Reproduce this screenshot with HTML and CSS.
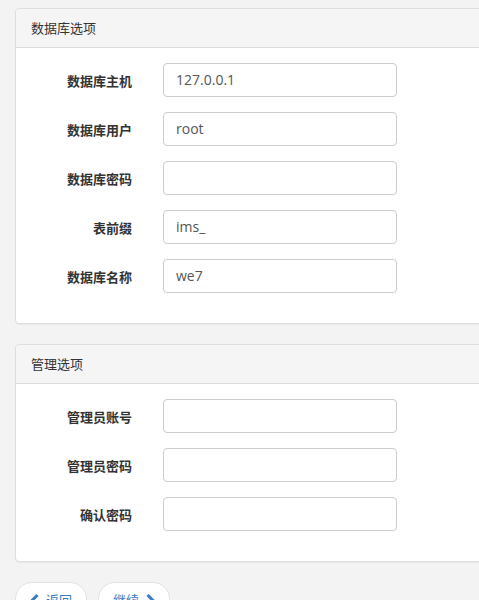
FILE: index.html
```html
<!DOCTYPE html>
<html>
<head>
<meta charset="utf-8">
<link rel="stylesheet" href="styles.css">
</head>
<body>
<div class="wrap">
  <div class="panel">
    <div class="panel-heading">数据库选项</div>
    <div class="panel-body">
      <div class="row"><label>数据库主机</label><div class="input">127.0.0.1</div></div>
      <div class="row"><label>数据库用户</label><div class="input">root</div></div>
      <div class="row"><label>数据库密码</label><div class="input"></div></div>
      <div class="row"><label>表前缀</label><div class="input">ims_</div></div>
      <div class="row"><label>数据库名称</label><div class="input">we7</div></div>
    </div>
  </div>
  <div class="panel">
    <div class="panel-heading">管理选项</div>
    <div class="panel-body">
      <div class="row"><label>管理员账号</label><div class="input"></div></div>
      <div class="row"><label>管理员密码</label><div class="input"></div></div>
      <div class="row"><label>确认密码</label><div class="input"></div></div>
    </div>
  </div>
  <div class="actions">
    <div class="btn"><svg class="chev" viewBox="0 0 10 12" width="10" height="12"><path d="M7.5 1 L2.5 6 L7.5 11" fill="none" stroke="#3a7cc2" stroke-width="3" stroke-linejoin="miter"/></svg><span>返回</span></div>
    <div class="btn"><span>继续</span><svg class="chev" viewBox="0 0 10 12" width="10" height="12"><path d="M2.5 1 L7.5 6 L2.5 11" fill="none" stroke="#3a7cc2" stroke-width="3" stroke-linejoin="miter"/></svg></div>
  </div>
</div>
</body>
</html>
```
FILE: styles.css
```css
html, body {
  margin: 0;
  padding: 0;
  background: #f3f3f3;
  overflow: hidden;
  font-family: "Noto Sans CJK SC", "Open Sans", sans-serif;
  color: #333;
}
.wrap {
  padding: 8px 0 0 15px;
  width: 490px;
}
.panel {
  background: #fff;
  border: 1px solid #dedede;
  border-radius: 4px;
  margin-bottom: 20px;
  box-shadow: 0 1px 1px rgba(0,0,0,0.04);
}
.panel-heading {
  background: #f5f5f5;
  border-bottom: 1px solid #dcdcdc;
  height: 38px;
  line-height: 38px;
  padding-left: 15px;
  font-size: 13px;
  border-radius: 4px 4px 0 0;
}
.panel-body {
  padding: 15px;
}
.row {
  display: flex;
  align-items: center;
  margin-bottom: 15px;
  height: 34px;
}
.row label {
  width: 101px;
  text-align: right;
  font-weight: bold;
  font-size: 13px;
  color: #333;
}
.input {
  margin-left: 31px;
  height: 32px;
  border: 1px solid #ccc;
  border-radius: 4px;
  padding: 0 12px;
  box-sizing: content-box;
  width: 208px;
  line-height: 32px;
  font-family: "Open Sans", "Noto Sans CJK SC", sans-serif;
  font-size: 14px;
  color: #555;
}
.actions {
  display: flex;
  gap: 11px;
  margin-top: 1px;
}
.btn {
  display: flex;
  align-items: center;
  gap: 6px;
  height: 34px;
  padding: 0 14px;
  background: #fff;
  border: 1px solid #e2e2e2;
  border-radius: 17px;
  color: #3a7cc2;
  font-size: 13px;
}
.btn span { line-height: 34px; }
.chev { display: block; }
```
